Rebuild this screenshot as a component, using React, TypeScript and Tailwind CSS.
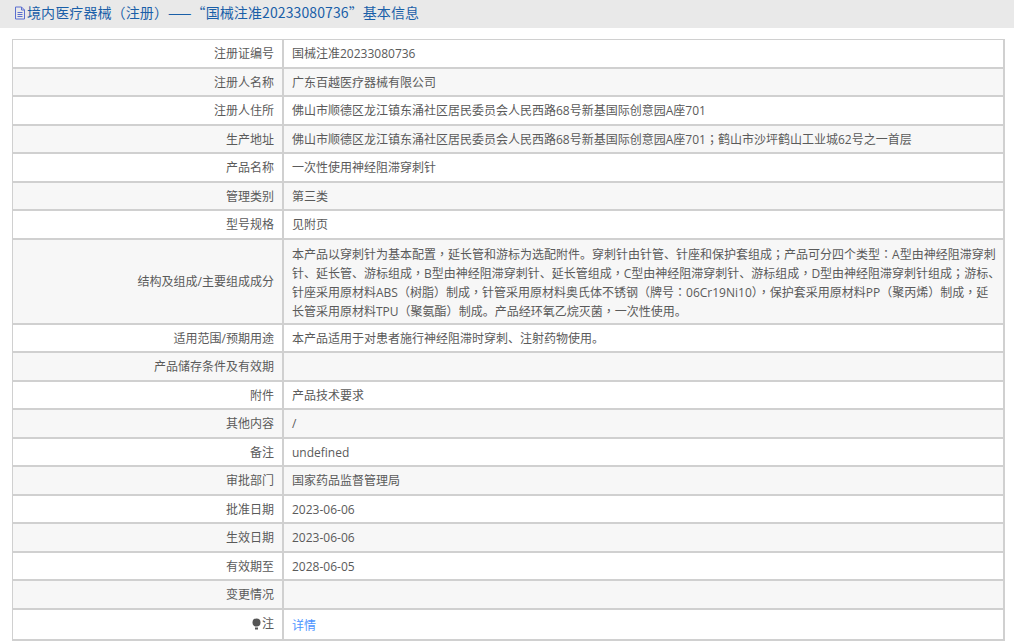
const rows: { label: string; value: string }[] = [
  { label: "注册证编号", value: "国械注准20233080736" },
  { label: "注册人名称", value: "广东百越医疗器械有限公司" },
  { label: "注册人住所", value: "佛山市顺德区龙江镇东涌社区居民委员会人民西路68号新基国际创意园A座701" },
  { label: "生产地址", value: "佛山市顺德区龙江镇东涌社区居民委员会人民西路68号新基国际创意园A座701；鹤山市沙坪鹤山工业城62号之一首层" },
  { label: "产品名称", value: "一次性使用神经阻滞穿刺针" },
  { label: "管理类别", value: "第三类" },
  { label: "型号规格", value: "见附页" },
  {
    label: "结构及组成/主要组成成分",
    value:
      "本产品以穿刺针为基本配置，延长管和游标为选配附件。穿刺针由针管、针座和保护套组成；产品可分四个类型：A型由神经阻滞穿刺\n针、延长管、游标组成，B型由神经阻滞穿刺针、延长管组成，C型由神经阻滞穿刺针、游标组成，D型由神经阻滞穿刺针组成；游标、\n针座采用原材料ABS（树脂）制成，针管采用原材料奥氏体不锈钢（牌号：06Cr19Ni10），保护套采用原材料PP（聚丙烯）制成，延\n长管采用原材料TPU（聚氨酯）制成。产品经环氧乙烷灭菌，一次性使用。",
  },
  { label: "适用范围/预期用途", value: "本产品适用于对患者施行神经阻滞时穿刺、注射药物使用。" },
  { label: "产品储存条件及有效期", value: "" },
  { label: "附件", value: "产品技术要求" },
  { label: "其他内容", value: "/" },
  { label: "备注", value: "undefined" },
  { label: "审批部门", value: "国家药品监督管理局" },
  { label: "批准日期", value: "2023-06-06" },
  { label: "生效日期", value: "2023-06-06" },
  { label: "有效期至", value: "2028-06-05" },
  { label: "变更情况", value: "" },
]

// 全角标点居中显示
function Punct({ text }: { text: string }) {
  return (
    <>
      {text.split(/([，；：（）])/).map((part, i) =>
        i % 2 === 1 ? (
          <span key={i} className="font-['Noto_Sans_CJK_TC',sans-serif] leading-none">
            {part}
          </span>
        ) : (
          part
        )
      )}
    </>
  )
}

function DocIcon() {
  return (
    <svg width="12" height="14" viewBox="0 0 12 14" fill="none" stroke="#5b6fd0" strokeWidth="1">
      <path d="M1.5 1h6l3 3v9h-9z" />
      <path d="M7.5 1v3h3M3.5 6.5h5M3.5 8.5h5M3.5 10.5h5" />
    </svg>
  )
}

function PinIcon() {
  return (
    <svg width="9" height="12" viewBox="0 0 9 12" fill="#555">
      <circle cx="4.5" cy="4.5" r="4" />
      <rect x="3" y="9.5" width="3" height="2" />
    </svg>
  )
}

export default function App() {
  return (
    <div className="min-h-screen bg-white font-['Open_Sans','Noto_Sans_CJK_SC',sans-serif] text-xs text-[#5a5a5a]">
      <div className="flex h-[28px] items-center gap-px bg-[#e9e9e9] pb-[3px] pl-[14px] font-['Noto_Sans_CJK_TC',sans-serif] text-[14px] tracking-[0.1px] text-[#1a5fa8]">
        <DocIcon />
        <span>境内医疗器械（注册）——“国械注准20233080736”基本信息</span>
      </div>

      <div className="mx-3 mt-[11px] w-[993px] border-2 border-t border-l border-[#d0d0d0]">
        {rows.map((row, i) => (
          <div
            key={row.label}
            className={`flex border-b-2 border-[#d0d0d0] ${i % 2 === 1 ? "bg-[#f7f7f7]" : "bg-white"}`}
          >
            <div className="flex w-[271px] shrink-0 items-center justify-end border-r-2 border-[#d0d0d0] pt-[2px] pr-[8px]">
              {row.label}
            </div>
            {row.value.includes("\n") ? (
              <div className="flex-1 pt-[5px] pb-[2px] pl-[8px] leading-[19px]">
                {row.value.split("\n").map((line) => (
                  <div key={line} className="whitespace-nowrap">
                    <Punct text={line} />
                  </div>
                ))}
              </div>
            ) : (
              <div className="min-h-[26.5px] flex-1 pt-[7px] pr-[2px] pb-[5px] pl-[8px] leading-[14.5px]">
                <Punct text={row.value} />
              </div>
            )}
          </div>
        ))}
        <div className="flex bg-white">
          <div className="flex w-[271px] shrink-0 items-center justify-end gap-px border-r-2 border-[#d0d0d0] pr-[8px]">
            <PinIcon />
            注
          </div>
          <div className="min-h-[29px] flex-1 pt-[9px] pr-[2px] pb-[5px] pl-[8px] leading-[14.5px] text-[#4d94ff]">详情</div>
        </div>
      </div>
    </div>
  )
}
